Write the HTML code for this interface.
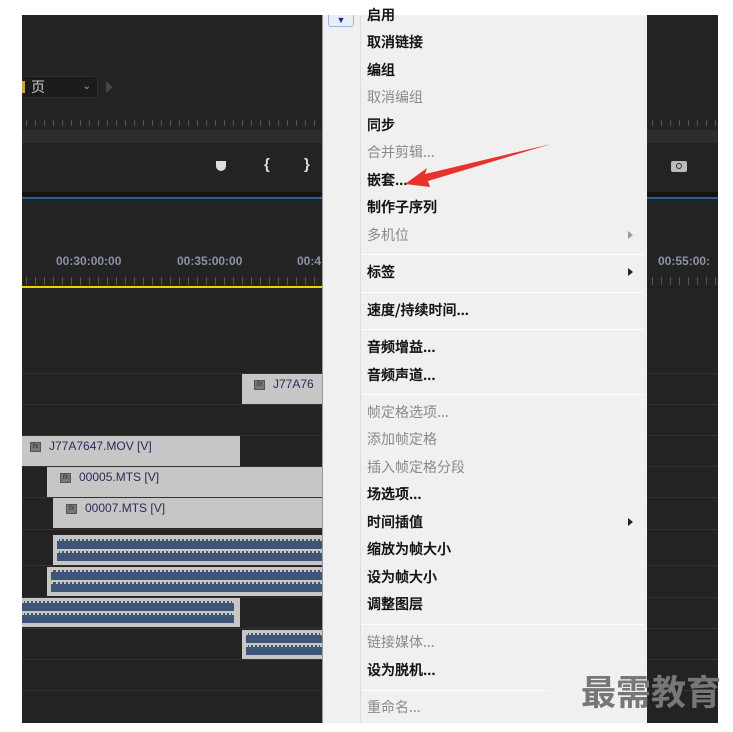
<!DOCTYPE html>
<html><head><meta charset="utf-8"><style>
*{margin:0;padding:0;box-sizing:border-box}
body{width:733px;height:732px;background:#fff;position:relative;overflow:hidden;font-family:"Liberation Sans","Noto Sans CJK SC",sans-serif}
.a{position:absolute}
.dark{left:22px;top:15px;width:696px;height:708px;background:#232323}
.line{position:absolute;height:1px;background:#333;left:22px;width:696px}
.clip{position:absolute;background:#c6c6c6;color:#2a2a5a;font-size:12px}
.fx{display:inline-block;width:11px;height:10px;background:#777;border:1px solid #555;vertical-align:middle;margin-right:8px;font-size:7px;color:#333;font-style:italic;text-align:center;line-height:8px}
.wave{position:absolute;left:4px;right:0;height:10px;background:#3e5578;border-top:2px dotted #c6c6c6}
.menu{left:322px;top:15px;width:325px;height:708px;background:#f0f0f0;border-left:1px solid #999}
.mi{position:absolute;left:44px;font-size:14px;color:#111;font-weight:500;line-height:16px;font-family:"Noto Sans CJK SC",sans-serif;-webkit-text-stroke:0.3px #111}
.dis{color:#8a8a8a;-webkit-text-stroke:0;font-weight:normal}
.sep{position:absolute;left:38px;right:3px;height:1px;background:#d8d8d8;border-bottom:1px solid #fff}
.tri{position:absolute;left:305px;width:0;height:0;border-top:4px solid transparent;border-bottom:4px solid transparent;border-left:5px solid #222}
.tc{position:absolute;color:#8a94a8;font-size:12px;font-weight:bold;top:254px}
.ticks{position:absolute;height:8px;background:repeating-linear-gradient(90deg,#555 0 1px,transparent 1px 9px)}
</style></head><body>
<div class="a dark"></div>
<div class="a" style="left:22px;top:76px;width:76px;height:22px;background:#1c1c1c;border:1px solid #2e2e2e;border-radius:3px;color:#ccc;font-size:14px;line-height:20px;padding-left:8px">页<span style="position:absolute;right:6px;font-size:10px;color:#aaa">&#8964;</span></div>
<div class="a" style="left:22px;top:81px;width:3px;height:12px;background:#c9a24a"></div>
<div class="a" style="left:106px;top:81px;width:0;height:0;border-top:6px solid transparent;border-bottom:6px solid transparent;border-left:7px solid #444"></div>
<div class="ticks" style="left:26px;top:120px;width:292px;height:6px"></div>
<div class="ticks" style="left:652px;top:120px;width:66px;height:6px"></div>
<div class="a" style="left:22px;top:130px;width:300px;height:13px;background:#2d2d2d"></div>
<div class="a" style="left:647px;top:130px;width:71px;height:13px;background:#2d2d2d"></div>
<div class="a" style="left:216px;top:161px;width:10px;height:10px;background:#ddd;border-radius:0 0 5px 5px"></div>
<div class="a" style="left:264px;top:156px;color:#ddd;font-size:15px;font-weight:bold">{</div>
<div class="a" style="left:304px;top:156px;color:#ddd;font-size:15px;font-weight:bold">}</div>
<div class="a" style="left:671px;top:161px;width:16px;height:11px;background:#bbb;border-radius:2px"></div>
<div class="a" style="left:676px;top:163px;width:6px;height:6px;border:1.5px solid #333;border-radius:50%"></div>
<div class="a" style="left:22px;top:192px;width:696px;height:6px;background:#151515"></div>
<div class="a" style="left:22px;top:197px;width:696px;height:2px;background:#2a5fa0"></div>
<div class="tc" style="left:56px">00:30:00:00</div>
<div class="tc" style="left:177px">00:35:00:00</div>
<div class="tc" style="left:297px">00:4</div>
<div class="tc" style="left:658px">00:55:00:</div>
<div class="ticks" style="left:26px;top:277px;width:296px"></div>
<div class="ticks" style="left:652px;top:277px;width:66px"></div>
<div class="a" style="left:22px;top:286px;width:300px;height:2px;background:#e8d800"></div>
<div class="line" style="top:373px"></div><div class="line" style="top:404px"></div><div class="line" style="top:435px"></div><div class="line" style="top:466px"></div><div class="line" style="top:497px"></div><div class="line" style="top:529px"></div><div class="line" style="top:565px"></div><div class="line" style="top:597px"></div><div class="line" style="top:628px"></div><div class="line" style="top:659px"></div><div class="line" style="top:690px"></div>
<div class="clip" style="left:242px;top:374px;width:80px;height:30px;padding:3px 0 0 12px"><span class="fx">fx</span>J77A76</div>
<div class="clip" style="left:22px;top:436px;width:218px;height:30px;padding:3px 0 0 8px"><span class="fx">fx</span>J77A7647.MOV [V]</div>
<div class="clip" style="left:47px;top:467px;width:275px;height:30px;padding:3px 0 0 13px"><span class="fx">fx</span>00005.MTS [V]</div>
<div class="clip" style="left:53px;top:498px;width:269px;height:30px;padding:3px 0 0 13px"><span class="fx">fx</span>00007.MTS [V]</div>
<div class="clip" style="left:53px;top:535px;width:269px;height:30px"><div class="wave" style="top:4px"></div><div class="wave" style="top:16px"></div></div>
<div class="clip" style="left:47px;top:567px;width:275px;height:29px"><div class="wave" style="top:3px"></div><div class="wave" style="top:15px"></div></div>
<div class="clip" style="left:22px;top:598px;width:218px;height:29px"><div class="wave" style="top:3px;right:6px;left:0"></div><div class="wave" style="top:15px;right:6px;left:0"></div></div>
<div class="clip" style="left:242px;top:630px;width:80px;height:29px"><div class="wave" style="top:3px"></div><div class="wave" style="top:15px"></div></div>
<div class="a menu">
<div class="a" style="left:5px;top:0;width:26px;height:12px;border:1px solid #9bb6e0;border-top:none;background:#e8eef8;border-radius:0 0 3px 3px;color:#1a2a8a;font-size:9px;text-align:center;line-height:10px">&#9660;</div>
<div class="a" style="left:37px;top:0;width:1px;height:708px;background:#dcdcdc"></div>
<div class="mi" style="top:-8px">启用</div>
<div class="mi" style="top:19px">取消链接</div>
<div class="mi" style="top:47px">编组</div>
<div class="mi dis" style="top:74px">取消编组</div>
<div class="mi" style="top:102px">同步</div>
<div class="mi dis" style="top:129px">合并剪辑...</div>
<div class="mi" style="top:157px">嵌套...</div>
<div class="mi" style="top:184px">制作子序列</div>
<div class="mi dis" style="top:212px">多机位</div><div class="tri" style="top:216px;border-left-color:#999"></div>
<div class="sep" style="top:239px"></div>
<div class="mi" style="top:249px">标签</div><div class="tri" style="top:253px"></div>
<div class="sep" style="top:277px"></div>
<div class="mi" style="top:287px">速度/持续时间...</div>
<div class="sep" style="top:314px"></div>
<div class="mi" style="top:324px">音频增益...</div>
<div class="mi" style="top:352px">音频声道...</div>
<div class="sep" style="top:379px"></div>
<div class="mi dis" style="top:389px">帧定格选项...</div>
<div class="mi dis" style="top:416px">添加帧定格</div>
<div class="mi dis" style="top:444px">插入帧定格分段</div>
<div class="mi" style="top:471px">场选项...</div>
<div class="mi" style="top:499px">时间插值</div><div class="tri" style="top:503px"></div>
<div class="mi" style="top:526px">缩放为帧大小</div>
<div class="mi" style="top:554px">设为帧大小</div>
<div class="mi" style="top:581px">调整图层</div>
<div class="sep" style="top:609px"></div>
<div class="mi dis" style="top:619px">链接媒体...</div>
<div class="mi" style="top:647px">设为脱机...</div>
<div class="sep" style="top:675px;right:100px"></div>
<div class="mi dis" style="top:684px">重命名...</div>
</div>
<svg class="a" style="left:0;top:0" width="733" height="732"><path d="M551 144 L425 174 L427 168 L405 184 L430 187 L428 181 Z" fill="#e8322c"/></svg>
<div class="a" style="left:581px;top:670px;font-size:35px;font-weight:bold;color:#777;font-family:'Noto Sans CJK SC',sans-serif;line-height:42px">最需教育</div>
</body></html>
